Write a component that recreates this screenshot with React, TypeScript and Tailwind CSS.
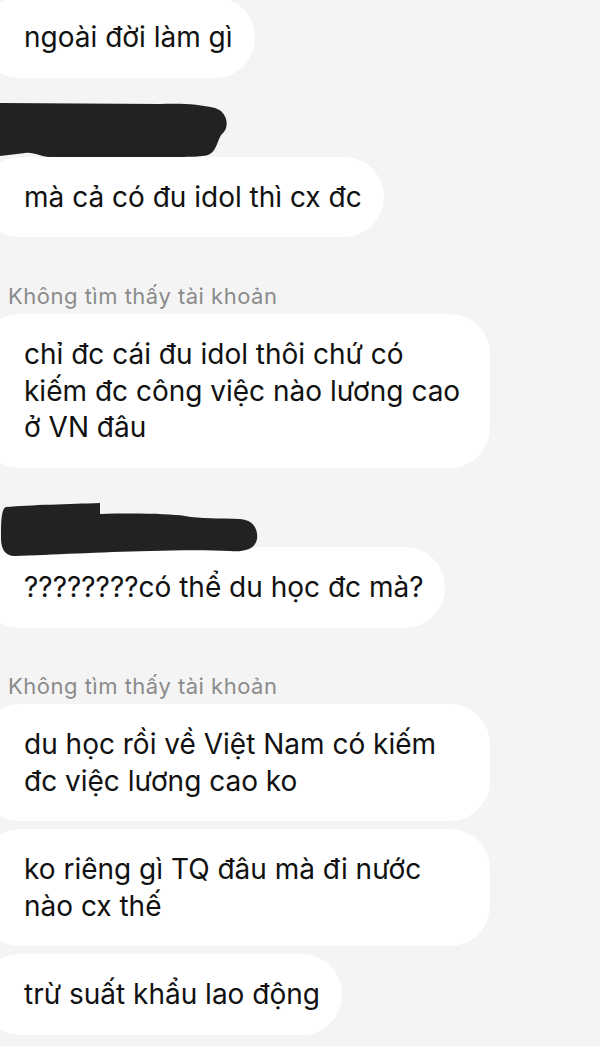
import React from 'react';

const font = { fontFamily: 'Inter, "Noto Sans", sans-serif' };

const Bubble: React.FC<{ children: React.ReactNode; className?: string }> = ({ children, className = '' }) => (
  <div
    className={`-ml-[20px] max-w-[510px] rounded-[40px] bg-white pl-[44px] pr-[22px] py-[22px] text-[28px] leading-[36.5px] text-[#111] ${className}`}
  >
    {children}
  </div>
);

const Label: React.FC<{ children: React.ReactNode; className?: string }> = ({ children, className = '' }) => (
  <div className={`pl-[8px] text-[22px] leading-[28px] tracking-[0.5px] text-[#8b8b8b] ${className}`}>{children}</div>
);

// hand-drawn redaction marks
const ScribbleOne = () => (
  <svg width="230" height="56" viewBox="0 0 230 56" className="block">
    <path
      d="M0 1 L160 2 C180 1 200 2 215 6 C228 10 230 26 222 32 C218 36 217 48 210 52 C205 55 190 55 160 55 L50 55 C40 55 35 50 25 51 L0 54 Z"
      fill="#222"
    />
  </svg>
);

const ScribbleTwo = () => (
  <svg width="260" height="54" viewBox="0 0 260 54" className="relative z-10 block">
    <path
      d="M6 4 C30 2 70 1 100 0 L100 11 C140 10 170 11 185 13 C200 16 220 15 240 16 C256 17 258 30 257 36 C255 46 245 49 230 48 C210 47 180 47 150 48 C100 49 50 52 15 53 C5 53 1 46 1 35 C1 20 1 6 6 4 Z"
      fill="#222"
    />
  </svg>
);

export default function App() {
  return (
    <div className="flex h-[1046px] w-[600px] flex-col items-start overflow-hidden bg-[#f4f4f4]" style={font}>
      <Bubble className="-mt-[3px]">ngoài đời làm gì</Bubble>
      <div className="mt-[24px]">
        <ScribbleOne />
      </div>
      <Bubble className="-mt-[1px]">mà cả có đu idol thì cx đc</Bubble>
      <Label className="mt-[45px]">Không tìm thấy tài khoản</Label>
      <Bubble className="mt-[4px]">chỉ đc cái đu idol thôi chứ có kiếm đc công việc nào lương cao ở VN đâu</Bubble>
      <div className="mt-[35.5px]">
        <ScribbleTwo />
      </div>
      <Bubble className="-mt-[10px]">????????có thể du học đc mà?</Bubble>
      <Label className="mt-[44.5px]">Không tìm thấy tài khoản</Label>
      <Bubble className="mt-[4px]">du học rồi về Việt Nam có kiếm đc việc lương cao ko</Bubble>
      <Bubble className="mt-[8px]">ko riêng gì TQ đâu mà đi nước nào cx thế</Bubble>
      <Bubble className="mt-[8px]">trừ suất khẩu lao động</Bubble>
    </div>
  );
}
